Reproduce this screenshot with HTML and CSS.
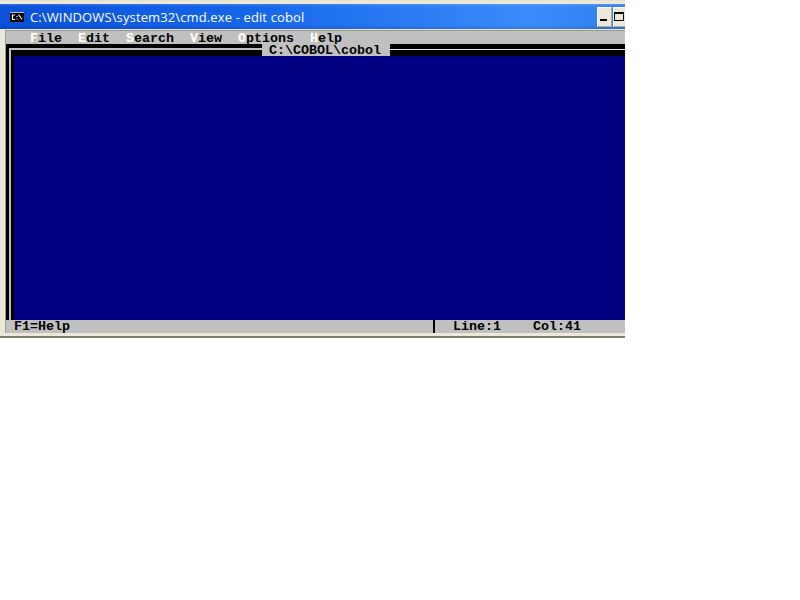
FILE: index.html
```
<!DOCTYPE html>
<html>
<head>
<meta charset="utf-8">
<title>cmd.exe - edit cobol</title>
<link rel="stylesheet" href="styles.css">
</head>
<body>
<div class="window">
  <div class="titlebar">
    <svg class="app-icon" width="16" height="16" viewBox="0 0 16 16">
      <rect x="1" y="3" width="14" height="10" fill="#000"/>
      <rect x="1" y="3" width="14" height="1" fill="#b8bcd0"/>
      <path d="M6 6H3.5V10.5H6M8 7V8M8 9.5V10.5M9.5 5.5L13 10.5" fill="none" stroke="#fff" stroke-width="1.2"/>
    </svg>
    <span class="title">C:\WINDOWS\system32\cmd.exe - edit cobol</span>
    <div class="buttons">
      <div class="btn"><span class="min"></span></div>
      <div class="btn"><span class="max"></span></div>
    </div>
  </div>
  <div class="console">
    <div class="menu">
      <span class="item"><b>F</b>ile</span>
      <span class="item"><b>E</b>dit</span>
      <span class="item"><b>S</b>earch</span>
      <span class="item"><b>V</b>iew</span>
      <span class="item"><b>O</b>ptions</span>
      <span class="item"><b>H</b>elp</span>
    </div>
    <div class="frame-top">
      <div class="rule rule-left"></div>
      <div class="filename">C:\COBOL\cobol</div>
      <div class="rule rule-right"></div>
    </div>
    <div class="editor">
      <div class="frame-left"></div>
      <div class="blue"></div>
    </div>
    <div class="status">
      <span class="help">F1=Help</span>
      <span class="sep"></span>
      <span class="line">Line:1</span>
      <span class="col">Col:41</span>
    </div>
  </div>
</div>
</body>
</html>
```
FILE: styles.css
```
* { box-sizing: border-box; }
html, body { margin: 0; padding: 0; background: #fff; }
body { width: 800px; height: 600px; overflow: hidden; }
.window {
  width: 625px;
  height: 338px;
  overflow: hidden;
  background: #ece9d8;
  border-top: 1px solid #e4e1d0;
  border-bottom: 2px solid #7f7c70;
  padding: 3px 0 3px 0;
  display: flex;
  flex-direction: column;
}
.titlebar {
  height: 25px;
  flex: none;
  display: flex;
  align-items: center;
  padding-left: 9px;
  background:
    linear-gradient(180deg, rgba(255,255,255,.14) 0, rgba(255,255,255,0) 3px, rgba(0,0,60,0) 21px, rgba(0,0,60,.14) 100%),
    linear-gradient(90deg, #0a50d8 0%, #1666ea 40%, #3a8cfa 85%, #2f7fee 100%);
}
.app-icon { flex: none; }
.title {
  margin-left: 5px;
  font: 13px/16px "Open Sans", "Liberation Sans", sans-serif;
  letter-spacing: .125px;
  color: #fff;
  white-space: nowrap;
}
.buttons { margin-left: auto; margin-right: -3px; display: flex; gap: 1px; }
.btn {
  width: 15px;
  height: 20px;
  flex: none;
  background: #ece9d8;
  border: 1px solid;
  border-color: #fff #aca899 #aca899 #fff;
  display: flex;
  align-items: flex-end;
  justify-content: flex-start;
  padding: 0 0 5px 2px;
}
.btn:last-child { padding-left: 0; }
.btn .min { width: 7px; height: 2px; background: #000; }
.btn .max { width: 10px; height: 9px; border: 1px solid #000; border-top-width: 2px; }
.console {
  flex: 1;
  min-height: 0;
  margin-top: 1px;
  margin-left: 5px;
  border-top: 1px solid #9a988c;
  border-left: 1px solid #a09e92;
  display: flex;
  flex-direction: column;
  font: bold 13.33px/13px "Liberation Mono", monospace;
  color: #000;
  white-space: pre;
}
.menu {
  height: 13px;
  flex: none;
  background: #c0c0c0;
  display: flex;
  padding: 1px 0 0 24px;
  gap: 16px;
}
.menu b { color: #fff; font-weight: bold; }
.frame-top { height: 12px; flex: none; display: flex; background: #000; }
.rule-left { width: 256px; padding: 4px 0 0 3px; }
.rule-left::after {
  content: "";
  display: block;
  height: 8px;
  border-top: 2px solid #c0c0c0;
  border-left: 2px solid #c0c0c0;
}
.rule-right { flex: 1; padding-top: 5px; }
.rule-right::after {
  content: "";
  display: block;
  height: 1px;
  background: #e4e4e4;
}
.filename { width: 128px; background: #c0c0c0; padding: 1px 0 0 7px; line-height: 12px; }
.editor { flex: 1; min-height: 0; display: flex; }
.frame-left { width: 8px; background: #000; }
.frame-left::after {
  content: "";
  display: block;
  width: 2px;
  height: 100%;
  margin-left: 3px;
  background: #c0c0c0;
}
.blue { flex: 1; background: #000080; }
.status {
  height: 13px;
  flex: none;
  background: #c0c0c0;
  display: flex;
  padding-left: 8px;
}
.help { width: 419px; }
.sep { width: 2px; background: #000; }
.line { margin-left: 18px; width: 80px; }
```
